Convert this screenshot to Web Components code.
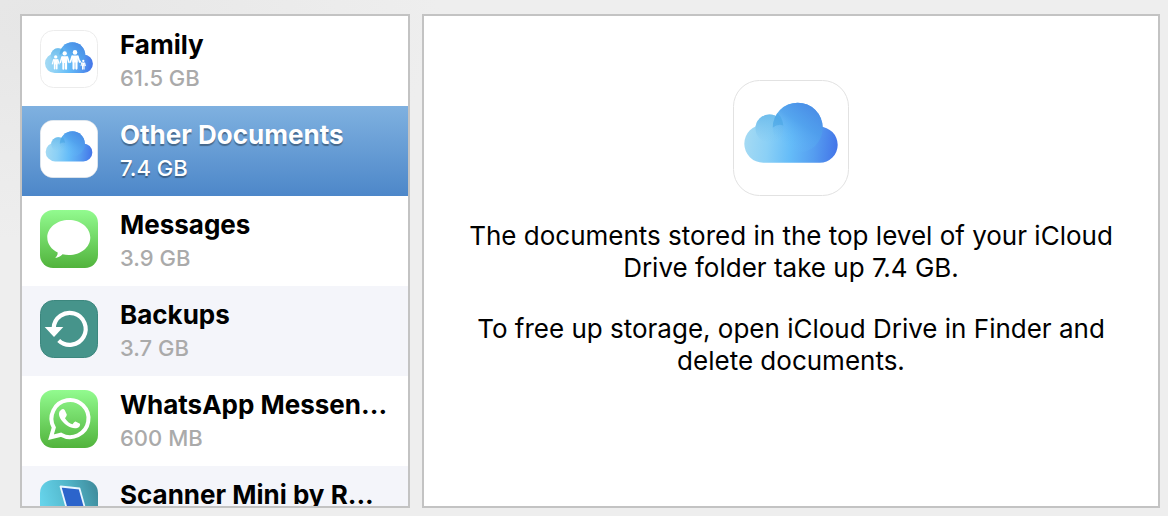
<!DOCTYPE html>
<html lang="en">
<head>
<meta charset="utf-8">
<meta name="viewport" content="width=device-width, initial-scale=1">
<title>Manage Storage</title>
<style>
  body { margin: 0; font-family: Inter, "Liberation Sans", sans-serif; color: #000; background: #eee; }
</style>
</head>
<body>
<storage-manager>
  <storage-list slot="list">
    <storage-row icon="family" name="Family" size="61.5 GB"></storage-row>
    <storage-row icon="cloud" name="Other Documents" size="7.4 GB" selected></storage-row>
    <storage-row icon="messages" name="Messages" size="3.9 GB"></storage-row>
    <storage-row icon="backups" name="Backups" size="3.7 GB"></storage-row>
    <storage-row icon="whatsapp" name="WhatsApp Messen..." size="600 MB"></storage-row>
    <storage-row icon="scanner" name="Scanner Mini by R..." size=""></storage-row>
  </storage-list>
  <storage-detail slot="detail">
    <app-icon slot="icon" name="cloud"></app-icon>
    <p>The documents stored in the top level of your iCloud Drive folder take up 7.4 GB.</p>
    <p>To free up storage, open iCloud Drive in Finder and delete documents.</p>
  </storage-detail>
</storage-manager>
<script>
const cloud = `
  <defs>
    <linearGradient id="c" gradientUnits="userSpaceOnUse" x1="11" y1="60" x2="105" y2="68">
      <stop offset="0" stop-color="#a5daf3"/><stop offset=".25" stop-color="#8bd0f6"/>
      <stop offset=".5" stop-color="#65bcf8"/><stop offset=".75" stop-color="#559df0"/><stop offset="1" stop-color="#4374e8"/>
    </linearGradient>
    <linearGradient id="b" gradientUnits="userSpaceOnUse" x1="80" y1="26" x2="54" y2="66">
      <stop offset="0" stop-color="#4a8de6"/><stop offset=".45" stop-color="#4f9fec" stop-opacity=".8"/><stop offset="1" stop-color="#65bcf8" stop-opacity="0"/>
    </linearGradient>
    <linearGradient id="s" x1="0" y1="0" x2="0" y2="1">
      <stop offset="0" stop-color="#6fbdec"/><stop offset="1" stop-color="#7cc4ee" stop-opacity="0"/>
    </linearGradient>
  </defs>
  <g fill="url(#c)">
    <circle cx="36.5" cy="48.5" r="14"/><circle cx="64.7" cy="47.7" r="25"/>
    <path d="M30.3 44.8a19 19 0 0 0 0 38H86.7a18 18 0 0 0 0-36L64 44Z"/>
  </g>
  <circle cx="36.5" cy="48.5" r="14" fill="url(#s)"/>
  <circle cx="64.7" cy="47.7" r="25" fill="url(#b)"/>
  <path d="M41.500 38.500Q42.500 35.500 44.500 33.200 49.500 37.500 50.300 45.500 45 43.500 39.800 47.500 39.500 43 41.500 38.500Z" fill="#3fa0e0" opacity=".45"/>`;
const person = (x, y, s) => `<g transform="translate(${x} ${y}) scale(${s})" fill="#fff" stroke="#fff" stroke-linecap="round" stroke-linejoin="round">
  <circle cx="0" cy="2" r="2.400" stroke="none"/><path d="M-2.500 6H2.500L2 12H-2Z" stroke-width="1.500"/>
  <path d="M-3 6-4.800 12M3 6 4.800 12" fill="none" stroke-width="1.700"/><path d="M-1.500 11V19M1.500 11V19" fill="none" stroke-width="2.300"/></g>`;
const green = `<defs><linearGradient id="g" x1="0" y1="0" x2="0" y2="1"><stop offset="0" stop-color="#92fb8f"/><stop offset="1" stop-color="#51b33c"/></linearGradient></defs>
  <rect width="58" height="58" rx="13" fill="url(#g)"/>`;
const white = `<rect x=".5" y=".5" width="57" height="57" rx="13" fill="#fff" stroke="#ececec"/>`;
const art = {
  cloud: `<rect x=".5" y=".5" width="115" height="115" rx="26" fill="#fff" stroke="#e2e2e2"/>${cloud}`,
  family: `${white}<g transform="translate(-.8 .6) scale(.513)">${cloud}</g>
    ${person(15.7, 25.5, .7)}${person(24.7, 21.600, .9)}${person(35, 20.500, .95)}${person(43.3, 30, .48)}
    <path d="M39.500 30 41.500 33.500" stroke="#fff"/>`,
  messages: `${green}<path d="M28.800 10C40.700 10 50.300 17.700 50.300 27.500S40.700 45 28.800 45Q25.500 45 22.500 44.300C20.500 46.500 18 47.800 15.200 48Q17.800 45.500 17.700 42.500C11.500 39.500 7.300 34 7.300 27.500 7.300 17.700 17 10 28.800 10Z" fill="#fff"/>`,
  backups: `<rect x=".5" y=".5" width="57" height="57" rx="13" fill="#46948b" stroke="#3c877e"/>
    <path d="M13.700 28A16 16 0 1 1 18.700 40.500" fill="none" stroke="#fff" stroke-width="4.200"/><path d="M4.700 27H23.300L14 37Z" fill="#fff"/>`,
  whatsapp: `${green}<path d="M11 47.300 13.800 37.500A18.500 18.500 0 1 1 21 44.700Z" fill="none" stroke="#fff" stroke-width="4" stroke-linejoin="miter"/>
    <path d="M21.500 19.500Q23.500 18.300 24.800 20.300L26.800 24.500Q27.100 25.500 25 28.200 28 33 32.500 34.300 34.500 31.300 35.500 31.500L40 33.800Q40.500 35 39.300 36.800C36 39.500 31.500 38.300 27 35.500 21.500 31.500 17.500 26 19.500 21.500Z" fill="#fff"/>`,
  scanner: `<defs><linearGradient id="t" x1="0" y1=".3" x2="1" y2="0"><stop offset="0" stop-color="#66d3ea"/><stop offset=".5" stop-color="#51b5c9"/><stop offset="1" stop-color="#3d8797"/></linearGradient></defs>
    <rect width="58" height="58" rx="13" fill="url(#t)"/><path d="M20.500 6.500 39.500 8.500 51 50 33 51Z" fill="#2c64cb" stroke="#e9f6ff" stroke-width="1.800" stroke-linejoin="round"/>`
};
customElements.define('app-icon', class extends HTMLElement {
  connectedCallback() {
    if (this.shadowRoot) return;
    const name = this.getAttribute('name');
    const side = name === 'cloud' ? 116 : 58;
    this.attachShadow({ mode: 'open' }).innerHTML = `
      <style>:host { display: block; width: 58px; height: 58px; } svg { display: block; width: 100%; height: 100%; }</style>
      <svg viewBox="0 0 ${side} ${side}" aria-hidden="true">${art[name]}</svg>`;
  }
});
customElements.define('storage-row', class extends HTMLElement {
  connectedCallback() {
    if (this.shadowRoot) return;
    this.attachShadow({ mode: 'open' }).innerHTML = `
      <style>
        :host { display: block; flex: none; background: var(--row, #fff); }
        :host([selected]) { background: linear-gradient(#7fb1e0, #4d87c9); color: #fff; text-shadow: 0 2px 1px rgba(0, 0, 0, .35); --sub: #fff; }
        button { all: unset; box-sizing: border-box; display: flex; align-items: flex-start; gap: 22px; width: 100%; height: 90px; padding: 12px 18px; cursor: default; }
        app-icon { flex: none; margin-top: 2px; }
        .text { display: flex; flex-direction: column; min-width: 0; white-space: nowrap; }
        .name { font-size: 26px; line-height: 34px; font-weight: 700; }
        .size { font-size: 22px; line-height: 32px; font-weight: 500; color: var(--sub, #aaa); }
      </style>
      <button type="button"><app-icon name="${this.getAttribute('icon')}"></app-icon>
        <span class="text"><span class="name">${this.getAttribute('name')}</span><span class="size">${this.getAttribute('size')}</span></span></button>`;
  }
});
customElements.define('storage-list', class extends HTMLElement {
  connectedCallback() {
    if (this.shadowRoot) return;
    this.attachShadow({ mode: 'open' }).innerHTML = `
      <style>
        :host { display: flex; flex-direction: column; box-sizing: border-box; height: 100%; border: 2px solid #c3c3c3; background: #fff; overflow: hidden; }
        ::slotted(:nth-child(even)) { --row: #f4f5fa; }
      </style><slot></slot>`;
  }
});
customElements.define('storage-detail', class extends HTMLElement {
  connectedCallback() {
    if (this.shadowRoot) return;
    this.attachShadow({ mode: 'open' }).innerHTML = `
      <style>
        :host { display: flex; flex-direction: column; align-items: center; box-sizing: border-box; height: 100%; padding: 64px 40px 24px; border: 2px solid #c3c3c3; background: #fff; text-align: center; font-size: 26px; line-height: 32px; }
        ::slotted(app-icon) { width: 116px; height: 116px; margin-bottom: 24px; }
        ::slotted(p) { margin: 0 0 29px; }
      </style><slot name="icon"></slot><slot></slot>`;
  }
});
customElements.define('storage-manager', class extends HTMLElement {
  connectedCallback() {
    if (this.shadowRoot) return;
    this.attachShadow({ mode: 'open' }).innerHTML = `
      <style>
        :host { display: grid; grid-template-columns: 390px minmax(0, 1fr); grid-template-rows: minmax(0, 1fr); gap: 12px; box-sizing: border-box; height: 100vh; padding: 14px 8px 8px 20px;
          background: radial-gradient(ellipse 400px 220px at 40px 20px, #e6e6e6, #eee); }
      </style><slot name="list"></slot><slot name="detail"></slot>`;
  }
});
</script>
</body>
</html>
